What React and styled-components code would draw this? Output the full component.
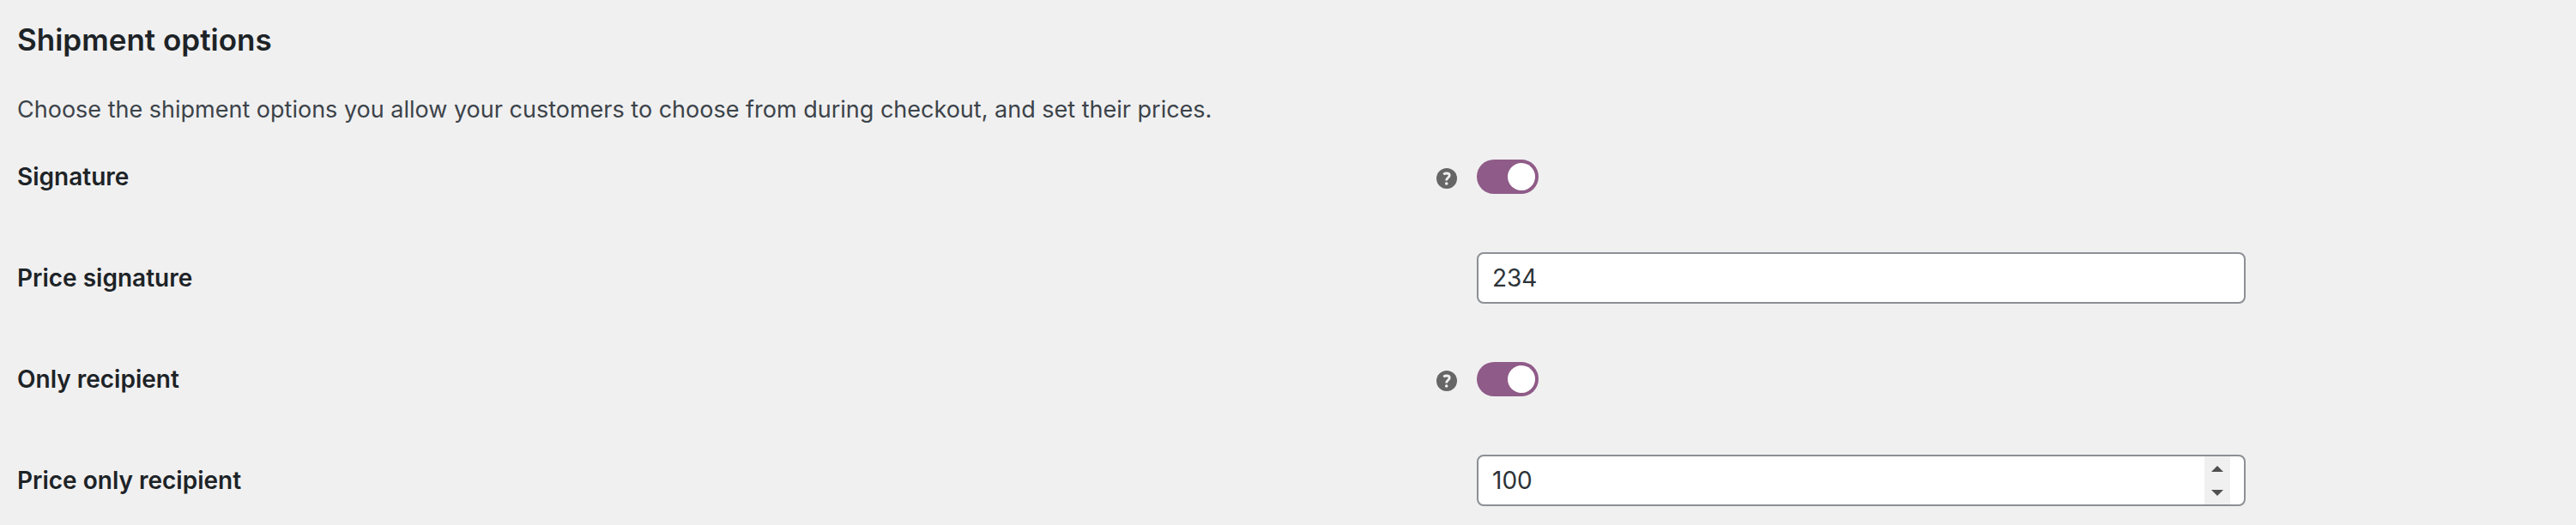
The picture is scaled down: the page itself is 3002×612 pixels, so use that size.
import React, { useState } from 'react';
import styled, { createGlobalStyle } from 'styled-components';

const GlobalStyle = createGlobalStyle`
  *, *::before, *::after { box-sizing: border-box; }
  body {
    margin: 0;
    background: #f0f0f0;
    color: #1d2327;
    font-family: Inter, "Liberation Sans", sans-serif;
    font-size: 28px;
  }
  input, button { font: inherit; }
`;

const Page = styled.main`
  padding: 20px;
`;

const Title = styled.h2`
  margin: 0 0 30px;
  font-size: 35px;
  line-height: 52px;
  font-weight: 600;
`;

const Intro = styled.p`
  margin: 0 0 22px;
  font-size: 27px;
  line-height: 52px;
  color: #3c434a;
`;

const Form = styled.form`
  display: flex;
  flex-direction: column;
  gap: 58px;
`;

const Row = styled.div`
  display: grid;
  grid-template-columns: 1701fr 896fr 365fr;
  align-items: center;
  min-height: 60px;
`;

const Heading = styled.div`
  display: flex;
  align-items: center;
  justify-content: space-between;
  padding-right: 23px;
`;

const Label = styled.label`
  font-weight: 600;
  line-height: 36px;
`;

const HelpButton = styled.button`
  display: block;
  margin-top: 4px;
  padding: 0;
  border: 0;
  background: none;
  cursor: help;

  svg { display: block; }
`;

const Switch = styled.input`
  appearance: none;
  display: flex;
  align-items: center;
  justify-content: ${({ checked }) => (checked ? 'flex-end' : 'flex-start')};
  width: 72px;
  height: 40px;
  margin: 0;
  padding: 4px;
  border-radius: 20px;
  background: ${({ checked }) => (checked ? '#8f5b88' : '#999999')};
  cursor: pointer;

  &::before {
    content: "";
    width: 32px;
    height: 32px;
    border-radius: 50%;
    background: #ffffff;
  }
`;

const Field = styled.div`
  display: flex;
  height: 60px;
  padding-right: 16px;
  border: 2px solid #8c8f94;
  border-radius: 8px;
  background: #ffffff;
  overflow: hidden;
`;

const FieldInput = styled.input`
  flex: 1;
  min-width: 0;
  padding: 0 16px;
  border: 0;
  outline: 0;
  background: transparent;
  color: #2c3338;
  appearance: textfield;

  &::-webkit-inner-spin-button { appearance: none; margin: 0; }
`;

const Stepper = styled.div`
  display: flex;
  flex-direction: column;
  width: 30px;
  background: #f0f0f0;
`;

const StepButton = styled.button`
  flex: 1;
  display: flex;
  align-items: center;
  justify-content: center;
  padding: 0;
  border: 0;
  background: none;
  color: #505050;
`;

function Help({ topic }) {
  return (
    <HelpButton type="button" aria-label={`Help: ${topic}`}>
      <svg width="24" height="24" viewBox="0 0 24 24" aria-hidden="true">
        <circle cx="12" cy="12" r="12" fill="#666666" />
        <path
          d="M8.2 7.2C9.4 6.4 10.6 6 12 6C14 6 15.2 7 15.2 8.6C15.2 11.2 11.6 11 11.6 14.4"
          fill="none"
          stroke="#f0f0f0"
          strokeWidth="2.8"
        />
        <circle cx="11.7" cy="18" r="1.8" fill="#f0f0f0" />
      </svg>
    </HelpButton>
  );
}

function ToggleRow({ id, label }) {
  const [on, setOn] = useState(true);
  return (
    <Row>
      <Heading>
        <Label htmlFor={id}>{label}</Label>
        <Help topic={label} />
      </Heading>
      <Switch id={id} type="checkbox" role="switch" checked={on} onChange={() => setOn(!on)} />
    </Row>
  );
}

function PriceRow({ id, label, initial, stepper }) {
  const [value, setValue] = useState(initial);
  const step = (by) => setValue(String(Number(value) + by));
  return (
    <Row>
      <Heading>
        <Label htmlFor={id}>{label}</Label>
      </Heading>
      <Field>
        <FieldInput id={id} type="number" value={value} onChange={(e) => setValue(e.target.value)} />
        {stepper && (
          <Stepper>
            <StepButton type="button" aria-label="Increase" onClick={() => step(1)}>
              <svg width="14" height="7" viewBox="0 0 14 7"><path d="M0 7L7 0L14 7Z" fill="currentColor" /></svg>
            </StepButton>
            <StepButton type="button" aria-label="Decrease" onClick={() => step(-1)}>
              <svg width="14" height="7" viewBox="0 0 14 7"><path d="M0 0L7 7L14 0Z" fill="currentColor" /></svg>
            </StepButton>
          </Stepper>
        )}
      </Field>
    </Row>
  );
}

export default function App() {
  return (
    <>
      <GlobalStyle />
      <Page>
        <Title>Shipment options</Title>
        <Intro>Choose the shipment options you allow your customers to choose from during checkout, and set their prices.</Intro>
        <Form>
          <ToggleRow id="signature" label="Signature" />
          <PriceRow id="price-signature" label="Price signature" initial="234" />
          <ToggleRow id="only-recipient" label="Only recipient" />
          <PriceRow id="price-only-recipient" label="Price only recipient" initial="100" stepper />
        </Form>
      </Page>
    </>
  );
}
